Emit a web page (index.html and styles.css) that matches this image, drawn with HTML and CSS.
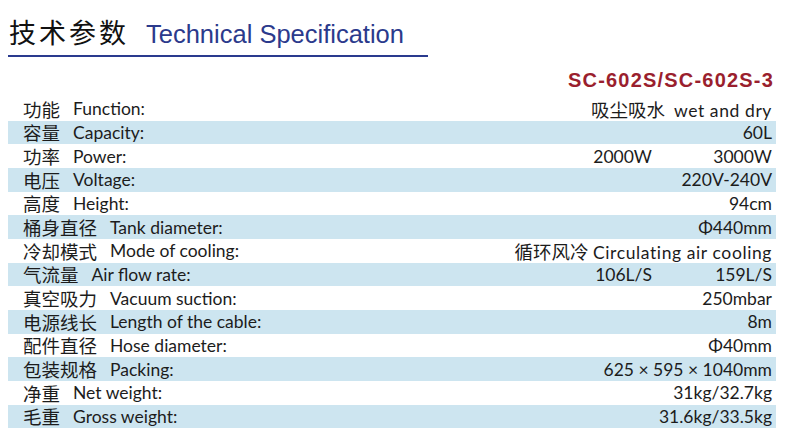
FILE: index.html
```html
<!DOCTYPE html>
<html lang="zh">
<head>
<meta charset="utf-8">
<link rel="stylesheet" href="styles.css">
</head>
<body>
<div class="page">
  <div class="title">
    <span class="title-cn">技术参数</span>
    <span class="title-en">Technical Specification</span>
  </div>
  <div class="rule"></div>
  <div class="model">SC-602S/SC-602S-3</div>
  <div class="spec">
    <div class="row"><span class="cn">功能</span><span class="en">Function:</span><span class="val"><span class="cnv">吸尘吸水</span>&nbsp; <span class="wide">wet and dry</span></span></div>
    <div class="row band"><span class="cn">容量</span><span class="en">Capacity:</span><span class="val">60L</span></div>
    <div class="row"><span class="cn">功率</span><span class="en">Power:</span><span class="val1">2000W</span><span class="val">3000W</span></div>
    <div class="row band"><span class="cn">电压</span><span class="en">Voltage:</span><span class="val">220V-240V</span></div>
    <div class="row"><span class="cn">高度</span><span class="en">Height:</span><span class="val">94cm</span></div>
    <div class="row band"><span class="cn">桶身直径</span><span class="en">Tank diameter:</span><span class="val">Φ440mm</span></div>
    <div class="row"><span class="cn">冷却模式</span><span class="en">Mode of cooling:</span><span class="val"><span class="cnv">循环风冷</span> <span class="wide">Circulating air cooling</span></span></div>
    <div class="row band"><span class="cn">气流量</span><span class="en">Air flow rate:</span><span class="val1">106L/S</span><span class="val">159L/S</span></div>
    <div class="row"><span class="cn">真空吸力</span><span class="en">Vacuum suction:</span><span class="val">250mbar</span></div>
    <div class="row band"><span class="cn">电源线长</span><span class="en">Length of the cable:</span><span class="val">8m</span></div>
    <div class="row"><span class="cn">配件直径</span><span class="en">Hose diameter:</span><span class="val">Φ40mm</span></div>
    <div class="row band"><span class="cn">包装规格</span><span class="en">Packing:</span><span class="val">625 × 595 × 1040mm</span></div>
    <div class="row"><span class="cn">净重</span><span class="en">Net weight:</span><span class="val">31kg/32.7kg</span></div>
    <div class="row band"><span class="cn">毛重</span><span class="en">Gross weight:</span><span class="val">31.6kg/33.5kg</span></div>
  </div>
</div>
</body>
</html>
```
FILE: styles.css
```css
html, body {
  margin: 0;
  padding: 0;
  background: #ffffff;
}
.page {
  width: 786px;
  height: 433px;
  overflow: hidden;
}
.title {
  display: flex;
  align-items: baseline;
  padding: 18px 0 0 9px;
  height: 43px;
  box-sizing: border-box;
}
.title-cn {
  font-family: "Noto Sans CJK SC", sans-serif;
  font-size: 27px;
  font-weight: 400;
  letter-spacing: 3px;
  color: #111;
  line-height: 1;
}
.title-en {
  font-family: "Liberation Sans", Arial, sans-serif;
  font-size: 25.5px;
  color: #2b3a8c;
  margin-left: 17px;
  line-height: 1;
}
.rule {
  margin: 12px 0 0 8px;
  width: 420px;
  height: 2px;
  background: #2a3a8e;
}
.model {
  text-align: right;
  padding-right: 12px;
  margin-top: 12px;
  font-family: "Liberation Sans", Arial, sans-serif;
  font-weight: bold;
  font-size: 20px;
  letter-spacing: 1.2px;
  line-height: 22px;
  color: #9a1f2e;
}
.spec {
  margin: 6px 10px 0 8px;
  font-family: "Lato", "Noto Sans CJK SC", sans-serif;
  font-size: 17.5px;
  color: #1c1c1c;
}
.row {
  display: flex;
  align-items: center;
  height: 23.67px;
  padding: 0 4px 0 15px;
}
.band {
  background: #cde5f0;
}
.cn {
  font-family: "Noto Sans CJK SC", sans-serif;
  font-size: 18.5px;
  margin-right: 13px;
}
.en {
  flex: 1;
}
.cnv {
  font-family: "Noto Sans CJK SC", sans-serif;
  font-size: 18.5px;
}
.wide {
  letter-spacing: 0.6px;
}
.val1 {
  text-align: right;
}
.val {
  text-align: right;
}
.val1 + .val {
  width: 120px;
}
```
